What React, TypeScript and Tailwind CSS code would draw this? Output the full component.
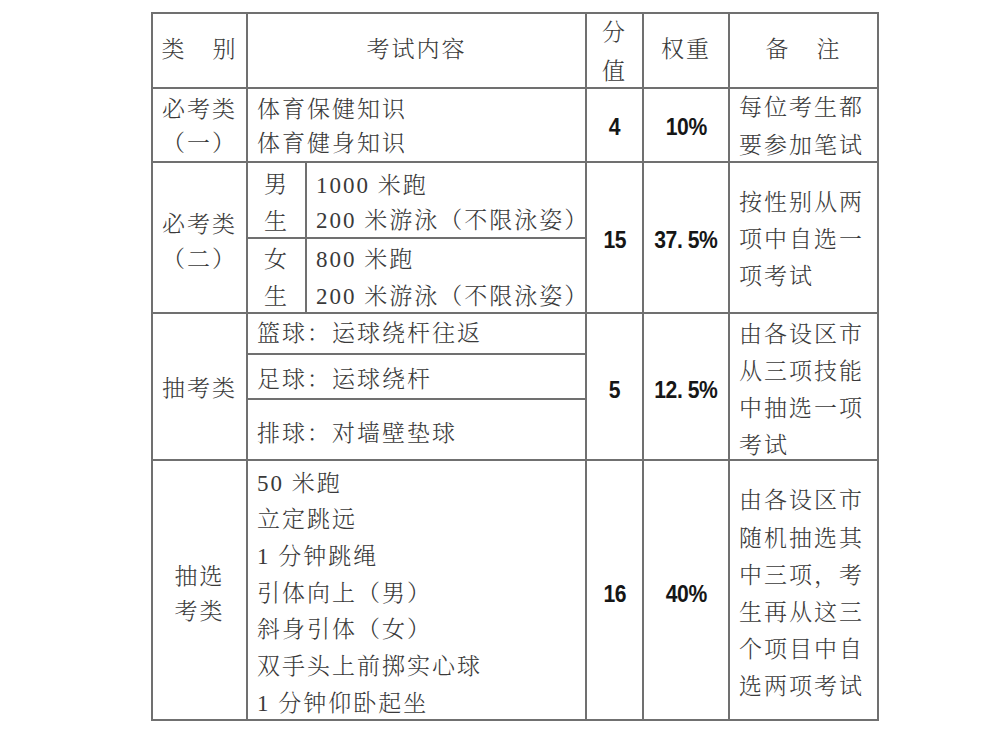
import React from "react";

// 体育考试项目表（扫描件风格）
const cn = "font-['Liberation_Serif','Noto_Serif_CJK_SC','Noto_Sans_CJK_SC',serif]";
const numCell = "items-center justify-center";

function Cell({ className = "", children }: { className?: string; children?: React.ReactNode }) {
  return <div className={`bg-white flex ${className}`}>{children}</div>;
}

function Num({ children }: { children: React.ReactNode }) {
  return (
    <span className="inline-block scale-x-[0.88] whitespace-nowrap font-['Liberation_Sans',sans-serif] text-[24px] font-bold tracking-[-0.5px] text-[#161616]">
      {children}
    </span>
  );
}

function Lines({ items, className = "" }: { items: string[]; className?: string }) {
  return (
    <div className={className}>
      {items.map((t) => (
        <div key={t}>{t}</div>
      ))}
    </div>
  );
}

export default function App() {
  return (
    <div className={`min-h-[732px] w-[1000px] bg-white pt-[12px] pl-[151px] ${cn} text-[23px] tracking-[2px] text-[#3a3a3a] font-light`}>
      <div className="grid w-fit grid-cols-[93px_57px_278px_55px_84px_147px] grid-rows-[73px_72px_74px_73px_39px_43px_59px_258px] gap-[2px] bg-[#707070] p-[2px]">
        {/* 表头 */}
        <Cell className="col-start-1 row-start-1 items-center justify-center gap-[26px]">
          <span>类</span>
          <span>别</span>
        </Cell>
        <Cell className="col-start-2 col-span-2 row-start-1 items-center justify-center">考试内容</Cell>
        <Cell className="col-start-4 row-start-1 items-center justify-center pt-[3px]">
          <Lines items={["分", "值"]} className="leading-[39px] text-center" />
        </Cell>
        <Cell className="col-start-5 row-start-1 items-center justify-center">权重</Cell>
        <Cell className="col-start-6 row-start-1 items-center justify-center gap-[26px]">
          <span>备</span>
          <span>注</span>
        </Cell>

        {/* 必考类（一） */}
        <Cell className="col-start-1 row-start-2 items-center justify-center pt-[4px]">
          <Lines items={["必考类", "（一）"]} className="leading-[34px] text-center" />
        </Cell>
        <Cell className="col-start-2 col-span-2 row-start-2 items-center pl-[9px] pt-[4px]">
          <Lines items={["体育保健知识", "体育健身知识"]} className="leading-[34px]" />
        </Cell>
        <Cell className={`col-start-4 row-start-2 pt-[4px] ${numCell}`}>
          <Num>4</Num>
        </Cell>
        <Cell className={`col-start-5 row-start-2 pt-[4px] ${numCell}`}>
          <Num>10%</Num>
        </Cell>
        <Cell className="col-start-6 row-start-2 items-center pl-[9px] pt-[4px]">
          <Lines items={["每位考生都", "要参加笔试"]} className="leading-[38px]" />
        </Cell>

        {/* 必考类（二） */}
        <Cell className="col-start-1 row-start-3 row-span-2 items-center justify-center pt-[8px]">
          <Lines items={["必考类", "（二）"]} className="leading-[35px] text-center" />
        </Cell>
        <Cell className="col-start-2 row-start-3 items-center justify-center pt-[6px]">
          <Lines items={["男", "生"]} className="leading-[37px] text-center" />
        </Cell>
        <Cell className="col-start-3 row-start-3 items-center pl-[9px] pt-[6px]">
          <Lines items={["1000 米跑", "200 米游泳（不限泳姿）"]} className="leading-[35px] whitespace-nowrap" />
        </Cell>
        <Cell className="col-start-2 row-start-4 items-center justify-center pt-[5px]">
          <Lines items={["女", "生"]} className="leading-[37px] text-center" />
        </Cell>
        <Cell className="col-start-3 row-start-4 items-center pl-[9px] pt-[5px]">
          <Lines items={["800 米跑", "200 米游泳（不限泳姿）"]} className="leading-[37px] whitespace-nowrap" />
        </Cell>
        <Cell className={`col-start-4 row-start-3 row-span-2 pt-[4px] ${numCell}`}>
          <Num>15</Num>
        </Cell>
        <Cell className={`col-start-5 row-start-3 row-span-2 pt-[4px] ${numCell}`}>
          <Num>37. 5%</Num>
        </Cell>
        <Cell className="col-start-6 row-start-3 row-span-2 items-center pl-[9px] pt-[4px]">
          <Lines items={["按性别从两", "项中自选一", "项考试"]} className="leading-[37px]" />
        </Cell>

        {/* 抽考类 */}
        <Cell className="col-start-1 row-start-5 row-span-3 items-center justify-center pt-[6px]">抽考类</Cell>
        <Cell className="col-start-2 col-span-2 row-start-5 items-center pl-[9px] pt-[2px]">篮球：运球绕杆往返</Cell>
        <Cell className="col-start-2 col-span-2 row-start-6 items-center pl-[9px] pt-[8px]">足球：运球绕杆</Cell>
        <Cell className="col-start-2 col-span-2 row-start-7 items-center pl-[9px] pt-[10px]">排球：对墙壁垫球</Cell>
        <Cell className={`col-start-4 row-start-5 row-span-3 pt-[6px] ${numCell}`}>
          <Num>5</Num>
        </Cell>
        <Cell className={`col-start-5 row-start-5 row-span-3 pt-[6px] ${numCell}`}>
          <Num>12. 5%</Num>
        </Cell>
        <Cell className="col-start-6 row-start-5 row-span-3 items-center pl-[9px] pt-[6px]">
          <Lines items={["由各设区市", "从三项技能", "中抽选一项", "考试"]} className="leading-[37px]" />
        </Cell>

        {/* 抽选考类 */}
        <Cell className="col-start-1 row-start-8 items-center justify-center pt-[8px]">
          <Lines items={["抽选", "考类"]} className="leading-[35px] text-center" />
        </Cell>
        <Cell className="col-start-2 col-span-2 row-start-8 items-center pl-[9px] pt-[8px]">
          <Lines
            items={["50 米跑", "立定跳远", "1 分钟跳绳", "引体向上（男）", "斜身引体（女）", "双手头上前掷实心球", "1 分钟仰卧起坐"]}
            className="leading-[36.7px] whitespace-nowrap"
          />
        </Cell>
        <Cell className={`col-start-4 row-start-8 pt-[8px] ${numCell}`}>
          <Num>16</Num>
        </Cell>
        <Cell className={`col-start-5 row-start-8 pt-[8px] ${numCell}`}>
          <Num>40%</Num>
        </Cell>
        <Cell className="col-start-6 row-start-8 items-center pl-[9px] pt-[8px]">
          <Lines
            items={["由各设区市", "随机抽选其", "中三项，考", "生再从这三", "个项目中自", "选两项考试"]}
            className="leading-[37.2px]"
          />
        </Cell>
      </div>
    </div>
  );
}
